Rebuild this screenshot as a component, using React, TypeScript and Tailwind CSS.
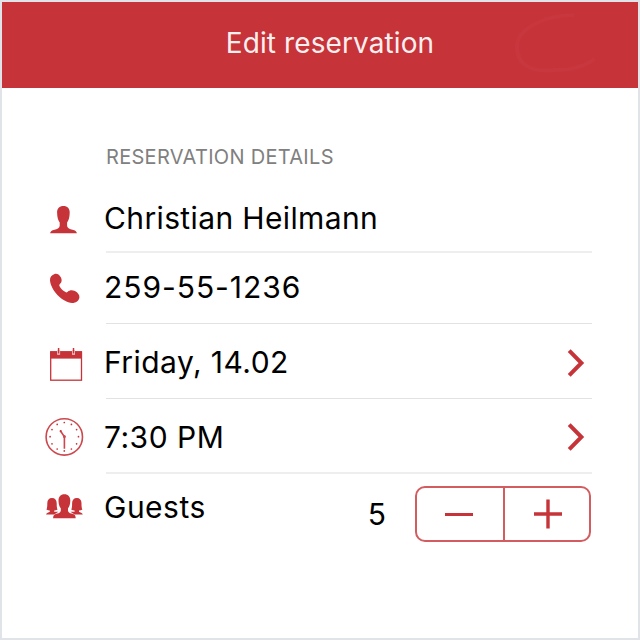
import type { ReactNode } from "react";

const RED = "#c63338";

function PersonIcon() {
  return (
    <svg viewBox="40 190 66 60" className="h-[60px] w-[66px]" fill={RED}>
      <path d="M63.400 206c-3.900 0-6.500 2.600-6.300 6.800.1 4.800 1.100 7.800 2.600 9.800v3.400c-.5 2.300-2.500 3.100-5.200 3.700-2.800.7-4 1.500-4.400 3.500h26.800c-.4-2-1.600-2.800-4.400-3.500-2.700-.6-4.900-1.400-5.400-3.700v-3.400c1.500-2 2.500-5 2.600-9.800.2-4.200-2.400-6.800-6.300-6.800z" />
    </svg>
  );
}

function PhoneIcon() {
  return (
    <svg viewBox="40 260 66 60" className="h-[60px] w-[66px]" fill={RED}>
      <path d="M54.600 273.900c2.500-.8 5.200.9 6.500 3.900.9 2.300.8 4.300-1 5.900-1 .9-1 1.700-.4 2.700 1.300 2.300 3.400 4.300 5.800 5.700.8.500 1.400.3 2.200-.4 1.900-1.700 4.500-2 7.200-.6 3 1.600 4.900 4 4.500 6.500-.5 3.300-3.500 5.500-7.200 5.500-9.800-1-21.400-12.600-22.200-22.900-.2-3.100 1.800-5.500 4.600-6.300z" />
    </svg>
  );
}

function CalendarIcon() {
  return (
    <svg viewBox="40 335 66 60" className="h-[60px] w-[66px]">
      <rect x="50.700" y="352" width="30.800" height="28.200" fill="#fff" stroke={RED} strokeWidth="1.300" />
      <rect x="50.200" y="351.200" width="31.800" height="7.400" fill={RED} />
      <path d="M58.600 350v4.800M73.500 350v4.800" stroke="#f3cfd1" strokeWidth="3" />
      <path d="M58.600 348v5.500M73.500 348v5.500" stroke={RED} strokeWidth="1.500" />
    </svg>
  );
}

function ClockIcon() {
  return (
    <svg viewBox="40 407 66 60" className="h-[60px] w-[66px]">
      <circle cx="64.300" cy="436.900" r="18.200" fill="none" stroke="#cd484d" strokeWidth="1.600" />
      <g fill={RED}>
        {Array.from({ length: 12 }, (_, i) => (
          <circle
            key={i}
            cx={64.3 + 14.2 * Math.sin((i * Math.PI) / 6)}
            cy={436.7 - 14.2 * Math.cos((i * Math.PI) / 6)}
            r="0.85"
          />
        ))}
        <circle cx="64.400" cy="436.700" r="1.400" />
        <circle cx="60.700" cy="431.200" r="1.100" />
      </g>
      <path d="M60.700 431.200l3.700 5.500v12" fill="none" stroke="#cd484d" strokeWidth="1.600" />
    </svg>
  );
}

function GuestsIcon() {
  return (
    <svg viewBox="40 476 66 60" className="h-[60px] w-[66px]" fill={RED}>
      <path d="M52 498c-3 0-4.700 2-4.700 5.200 0 2.600-.1 4.900-.9 6.400 1 .6 2.200.8 3.400.9v1.200c-.9 1-3.500.9-3.800 2.900h8.200l4.200-2.900h-4.200v-1.200c1.200-.1 2.400-.3 3.400-.9-.8-1.500-.9-3.800-.9-6.400 0-3.200-1.700-5.200-4.700-5.200z" />
      <path d="M76.800 498c3 0 4.700 2 4.700 5.200 0 2.600.1 4.900.9 6.400-1 .6-2.200.8-3.400.9v1.200c.9 1 3.500.9 3.800 2.900h-8.200l-4.200-2.900h4.200v-1.200c-1.200-.1-2.400-.3-3.400-.9.8-1.500.9-3.800.9-6.400 0-3.200 1.700-5.200 4.700-5.200z" />
      <path d="M64.400 494.300c-3.900 0-6 2.700-5.900 6.500.1 3.700.9 5.900 2.300 7.500v2.800c-.7 2.300-3 2.400-5 3-1.800.5-2.600 1.600-2.700 4.100h22.600c-.1-2.500-.9-3.600-2.700-4.100-2-.6-4.300-.7-5-3v-2.800c1.400-1.600 2.200-3.800 2.300-7.500.1-3.800-2-6.500-5.900-6.500z" />
    </svg>
  );
}

function Chevron() {
  return (
    <svg viewBox="0 0 20 30" className="mr-[6px] h-[30px] w-[20px]" fill="none" stroke={RED} strokeWidth="4">
      <path d="M3.200 2.600L15.400 15 3.200 27.400" />
    </svg>
  );
}

function Row({ icon, className, children }: { icon: ReactNode; className: string; children: ReactNode }) {
  return (
    <div className="flex">
      {icon}
      <div className={`flex w-[486px] justify-between ${className}`}>{children}</div>
    </div>
  );
}

export default function App() {
  return (
    <main
      className="h-[640px] w-[640px] overflow-hidden border-2 border-[#e0e3e7] bg-white text-[30px] leading-[36px] text-black"
      style={{ fontFamily: 'Inter, "Liberation Sans", sans-serif' }}
    >
      <header className="relative flex h-[86px] items-center justify-center bg-[#c63338] pb-1 pl-[20px]">
        <h1 className="text-[28px] leading-[36px] tracking-[0.1px] text-[#fceff0]">Edit reservation</h1>
        <svg className="absolute top-0 right-0 h-[86px] w-[140px]" viewBox="498 2 140 86" fill="none">
          <path d="M574 15C548 15 519 27 517 45c-1 20 15 28 38 25 17 0 29-3 40-11" stroke="#c8373d" strokeWidth="4" />
        </svg>
      </header>

      <section className="pl-[38px]">
        <h2 className="pt-[55px] pl-[66px] text-[20px] leading-[28px] tracking-[0.3px] text-[#808080]">
          RESERVATION DETAILS
        </h2>
        <div className="pt-[19px]">
          <Row icon={<PersonIcon />} className="h-[63px] items-start border-b-2 border-[#eeeeee] pt-[10px]">
            <span className="-ml-[2px] tracking-[0.37px]">Christian Heilmann</span>
          </Row>
          <div className="-mt-px pt-[8px]">
            <Row icon={<PhoneIcon />} className="h-[64px] items-start border-b border-[#e2e2e2] pt-[9px]">
              <span className="-ml-[2px] tracking-[0.95px]">259-55-1236</span>
            </Row>
          </div>
          <div className="pt-[11px]">
            <Row icon={<CalendarIcon />} className="h-[64px] items-start border-b border-[#e2e2e2] pt-[9px]">
              <span className="-ml-[2px] tracking-[0.45px]">Friday, 14.02</span>
              <span className="pt-[4px]"><Chevron /></span>
            </Row>
          </div>
          <div className="pt-[8px]">
            <Row icon={<ClockIcon />} className="h-[67px] items-start border-b-2 border-[#eeeeee] pt-[11px]">
              <span className="-ml-[2px] pt-px tracking-[0.5px]">7:30 PM</span>
              <span className="pt-[4px]"><Chevron /></span>
            </Row>
          </div>
          <div className="pt-[2px]">
            <Row icon={<GuestsIcon />} className="h-[76px] items-start pt-[10px]">
              <span className="-ml-[2px] pt-[3px] tracking-[0.5px]">Guests</span>
              <div className="mr-px flex">
                <span className="mr-[29px] pt-[10px]">5</span>
                <div className="flex h-[56px] w-[176px] rounded-[10px] border-2 border-[#d25c60]">
                  <button aria-label="Fewer guests" className="flex w-[88px] items-center justify-center border-r-2 border-[#d25c60] pt-px pr-[3px]">
                    <span className="h-[3px] w-[28px] bg-[#c63338]" />
                  </button>
                  <button aria-label="More guests" className="flex flex-1 items-center justify-center pl-[2px]">
                    <svg viewBox="0 0 30 30" className="h-[30px] w-[30px]" stroke={RED} strokeWidth="3.400">
                      <path d="M1 15h28M15 .5v29" />
                    </svg>
                  </button>
                </div>
              </div>
            </Row>
          </div>
        </div>
      </section>
    </main>
  );
}
